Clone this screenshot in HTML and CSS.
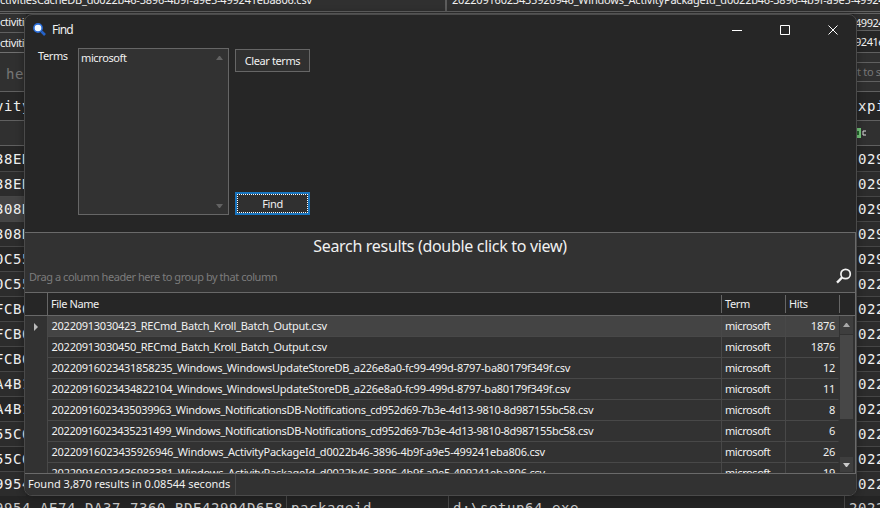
FILE: index.html
```
<!DOCTYPE html>
<html lang="en">
<head>
<meta charset="utf-8">
<title>Find</title>
<link rel="stylesheet" href="styles.css">
</head>
<body>
<main class="desktop">
  <div class="backdrop">
    <div class="band files"><span class="file-a">ctivitiesCacheDB_d0022b46-3896-4b9f-a9e5-499241eba806.csv</span><span class="file-b">20220916023435926946_Windows_ActivityPackageId_d0022b46-3896-4b9f-a9e5-499241eba806.csv</span></div>
    <div class="sides">
      <div class="side left">
        <div class="small r1">ctivities</div><div class="small r2">ctivities</div>
        <div class="group mono">he</div><div class="head mono">vity</div><div class="filter"></div>
        <div class="cell first">38ED</div><div class="cell">38ED</div><div class="cell current">308D</div><div class="cell">308D</div><div class="cell">0C55</div><div class="cell">0C55</div><div class="cell">FCB6</div><div class="cell">FCB6</div><div class="cell">FCB6</div><div class="cell">A4B1</div><div class="cell">A4B1</div><div class="cell">55C6</div><div class="cell">55C6</div><div class="cell">9954</div>
      </div>
      <div class="side right">
        <div class="small q1">49924</div><div class="small q2">9241e</div>
        <div class="search"><span>ct to s</span></div><div class="head mono">xpi</div>
        <div class="filter"><svg width="12" height="12" viewBox="0 0 12 12"><path d="M0 1h5v10H0z" fill="#75c77b"/><path d="M1 4h2v4H1z" fill="#23652b"/><path d="M10 4H7v4h3" fill="none" stroke="#ddd"/></svg></div>
        <div class="cell first">2029</div><div class="cell">2029</div><div class="cell">2029</div><div class="cell">2029</div><div class="cell">2029</div><div class="cell">2022</div><div class="cell">2022</div><div class="cell">2022</div><div class="cell">2022</div><div class="cell">2022</div><div class="cell">2022</div><div class="cell">2022</div><div class="cell">2022</div><div class="cell">2022</div>
      </div>
    </div>
    <div class="last mono"><span class="guid">9954-AE74-DA37-7360-BDE42994D6E8</span><span class="kind">packageid</span><span class="path">d:\setup64.exe</span><span class="date">2022</span></div>
  </div>

  <section class="window">
    <header class="titlebar">
      <svg class="app" width="14" height="14" viewBox="0 0 14 14"><path d="M8.500 8.500 12 12" stroke="#2462c8" stroke-width="2.600"/><circle cx="5" cy="5" r="4.100" fill="#f4faff" stroke="#2c6fda" stroke-width="1.600"/></svg>
      <span class="name">Find</span>
      <svg class="controls" width="106" height="12" viewBox="0 0 106 12" fill="none" stroke="#fff"><path d="M0 6.500h10M48.500 1.500h9v9h-9zM96.500 1.500l9 9m0-9l-9 9"/></svg>
    </header>
    <div class="form">
      <label>Terms</label>
      <div class="memo"><span>microsoft</span><i class="up"></i><i class="down"></i></div>
      <div class="buttons"><button>Clear terms</button><button class="primary"><span>Find</span></button></div>
    </div>
    <div class="results">
      <h1>Search results (double click to view)</h1>
      <div class="drag"><span>Drag a column header here to group by that column</span>
        <svg width="16" height="16" viewBox="0 0 16 16" fill="none" stroke="#f2f2f2"><circle cx="9.600" cy="6" r="4.700" stroke-width="1.700"/><path d="M6.200 9.400 1 14.600" stroke-width="2.300"/></svg></div>
      <div class="thead"><span class="ind"></span><span class="fn">File Name</span><span class="term"><b>Term</b></span><span class="hits"><b>Hits</b></span><span class="end"></span></div>
      <div class="grid">
        <div class="rows">
          <div class="row active"><span class="ind"><i></i></span><span class="fn"><b>20220913030423_RECmd_Batch_Kroll_Batch_Output.csv</b></span><span class="term">microsoft</span><span class="hits">1876</span></div>
          <div class="row"><span class="ind"></span><span class="fn"><b>20220913030450_RECmd_Batch_Kroll_Batch_Output.csv</b></span><span class="term">microsoft</span><span class="hits">1876</span></div>
          <div class="row"><span class="ind"></span><span class="fn"><b>20220916023431858235_Windows_WindowsUpdateStoreDB_a226e8a0-fc99-499d-8797-ba80179f349f.csv</b></span><span class="term">microsoft</span><span class="hits">12</span></div>
          <div class="row"><span class="ind"></span><span class="fn"><b>20220916023434822104_Windows_WindowsUpdateStoreDB_a226e8a0-fc99-499d-8797-ba80179f349f.csv</b></span><span class="term">microsoft</span><span class="hits">11</span></div>
          <div class="row"><span class="ind"></span><span class="fn tight"><b>20220916023435039963_Windows_NotificationsDB-Notifications_cd952d69-7b3e-4d13-9810-8d987155bc58.csv</b></span><span class="term">microsoft</span><span class="hits">8</span></div>
          <div class="row"><span class="ind"></span><span class="fn tight"><b>20220916023435231499_Windows_NotificationsDB-Notifications_cd952d69-7b3e-4d13-9810-8d987155bc58.csv</b></span><span class="term">microsoft</span><span class="hits">6</span></div>
          <div class="row"><span class="ind"></span><span class="fn loose"><b>20220916023435926946_Windows_ActivityPackageId_d0022b46-3896-4b9f-a9e5-499241eba806.csv</b></span><span class="term">microsoft</span><span class="hits">26</span></div>
          <div class="row"><span class="ind"></span><span class="fn loose"><b>20220916023436983381_Windows_ActivityPackageId_d0022b46-3896-4b9f-a9e5-499241eba806.csv</b></span><span class="term">microsoft</span><span class="hits">19</span></div>
        </div>
        <div class="scroll"><div class="arrow"><i class="up"></i></div><div class="thumb"></div><div class="arrow low"><i class="down"></i></div></div>
      </div>
    </div>
    <footer><span>Found 3,870 results in 0.08544 seconds</span></footer>
  </section>
</main>
</body>
</html>
```
FILE: styles.css
```
* { box-sizing: border-box; }
body { margin: 0; background: #262626; color: #f0f0f0; font: 11px/14px "Noto Sans", sans-serif; letter-spacing: -0.26px; }
b { font-weight: 400; }
svg { display: block; flex: none; }
.desktop { position: relative; width: 880px; height: 508px; overflow: hidden; white-space: nowrap; }
.mono, .cell { font-family: "DejaVu Sans Mono", monospace; font-size: 14px; letter-spacing: 0.57px; }
.backdrop { height: 508px; overflow: hidden; }
.files { display: flex; height: 14px; background: #303030; border-bottom: 3px double #626262; }
.files span { display: block; line-height: 14px; margin-top: -7px; height: 18px; overflow: hidden; letter-spacing: -0.21px; }
.file-a { width: 447px; border-right: 2px solid #5c5c5c; }
.file-b { flex: 1; padding-left: 5px; }
.sides { display: flex; justify-content: space-between; height: 482px; }
.side { width: 26px; overflow: hidden; }
.side > div { border-bottom: 1px solid #606060; overflow: hidden; }
.small { background: #303030; display: flex; align-items: center; letter-spacing: -0.45px; }
.side .r1 { height: 19px; padding-bottom: 2px; }
.side .r2 { height: 20px; border-bottom-color: #707070; }
.side .q1 { height: 17px; padding-left: 1px; padding-top: 1px; }
.side .q2 { height: 22px; padding-left: 1px; background: #262626; }
.group { height: 39px; padding-left: 6px; line-height: 42px; color: #777; background: #303030; }
.search { height: 39px; padding: 9px 0 10px; background: #303030; color: #777; letter-spacing: -0.3px; }
.search span { display: block; height: 20px; text-indent: -2px; border: solid #606060; border-width: 1px 0; line-height: 18px; }
.head { height: 29px; line-height: 29px; }
.left .head { text-indent: -4px; }
.right .head { text-indent: 4px; }
.left .head { text-indent: -5px; }
.filter { height: 25px; background: #303030; padding: 6px 0 0 2px; }
.side .cell { height: 25px; line-height: 25px; text-indent: -5px; border-color: #464646; }
.side .cell.first { height: 26px; line-height: 26px; }
.side .cell:nth-child(odd) { background: #2c2c2c; }
.side .current { background: #444 !important; }
.last { display: flex; height: 12px; line-height: 25px; background: #242424; color: #c8c8c8; }
.last span { height: 12px; overflow: hidden; border-right: 1px solid #484848; }
.guid { width: 287px; text-indent: -5px; }
.kind { width: 162px; padding-left: 4px; }
.path { width: 396px; padding-left: 4px; }
.date { flex: 1; padding-left: 4px; border: 0 !important; }

.window { position: absolute; left: 24px; top: 14px; width: 833px; height: 482px; background: #262626; border: 1px solid #4a4a4a; border-radius: 8px; overflow: hidden; display: flex; flex-direction: column; box-shadow: 0 0 8px #0005; }
.titlebar { height: 33px; display: flex; align-items: center; padding: 0 18px 3px 8px; }
.name { margin-left: 5px; font-size: 12px; letter-spacing: -0.8px; }
.controls { margin-left: auto; }
.form { height: 184px; display: flex; align-items: flex-start; padding-left: 13px; }
.form label { width: 40px; padding-top: 1px; }
.form label, .memo, button { letter-spacing: -0.4px; }
.memo { display: grid; grid-template-columns: 1fr 7px; align-content: space-between; width: 151px; height: 167px; border: 1px solid #666; background: #323232; padding: 2px 5px 6px 2px; }
.memo i { align-self: center; }
.memo .down { grid-column: 2; }
i { display: block; }
.up, .down { width: 7px; border: solid transparent; border-width: 0 3.5px 4px; border-bottom-color: #626262; }
.down { border-width: 4px 3.5px 0; border-top-color: #626262; }
.buttons { height: 167px; margin-left: 6px; display: flex; flex-direction: column; justify-content: space-between; }
button { width: 75px; height: 23px; padding: 0; margin-top: 1px; background: #303030; color: #f0f0f0; border: 1px solid #666; font: inherit; }
.primary { border: 2px solid #1874be; }
.primary span { display: block; height: 19px; line-height: 17px; border: 1px dotted #fff; }
.results { height: 242px; border: 1px solid #6a6a6a; background: #323232; margin-left: -1px; display: flex; flex-direction: column; flex: none; }
h1 { margin: 0; height: 30px; line-height: 27px; font-size: 16px; font-weight: 400; text-align: center; letter-spacing: -0.31px; }
.drag { height: 29px; display: flex; justify-content: space-between; align-items: center; padding: 0 3px 1px 4px; color: #7c7c7c; letter-spacing: -0.44px; }
.drag svg { margin-top: -2px; }
.thead { height: 24px; flex: none; display: flex; align-items: center; background: #262626; border: solid #686868; border-width: 1px 0; letter-spacing: -0.4px; }
.ind { width: 23px; height: 100%; border-right: 1px solid #666; display: flex; align-items: center; padding-left: 9px; flex: none; }
.fn { width: 674px; padding-left: 3px; }
.thead .term, .thead .hits { height: 18px; border-left: 1px solid #666; margin-left: -1px; }
.thead .end { height: 18px; border-left: 1px solid #666; }
.thead b { line-height: 18px; }
.term { width: 65px; padding-left: 3px; }
.hits { width: 54px; padding-left: 3px; }
.grid { height: 157px; display: flex; overflow: hidden; }
.rows { width: 814px; }
.row { display: flex; height: 21px; }
.row .ind { border-color: #484848; }
.row > span:not(.ind) { height: 21px; line-height: 20px; border: solid #484848; border-width: 0 1px 1px 0; }
.row .term { width: 64px; letter-spacing: -0.42px; }
.row .hits { width: 53px; padding-right: 3px; text-align: right; border-right-color: transparent !important; }
.row .fn { padding-left: 3.5px; letter-spacing: -0.25px; }
.row .tight { letter-spacing: -0.31px; }
.row .loose { letter-spacing: -0.21px; }
.row.active > span:not(.ind) { background: #444; }
.ind i { border: solid transparent; border-width: 4px 0 4px 4px; border-left-color: #bbb; }
.scroll { width: 13px; margin-left: 1px; display: flex; flex-direction: column; }
.arrow { height: 18px; background: #3e3e3e; display: grid; place-items: center; }
.arrow .up { border-bottom-color: #aaa; }
.arrow .down { border-top-color: #ccc; }
.thumb { height: 84px; background: #474747; margin-top: 1px; }
.low { height: 15px; margin-top: auto; margin-bottom: 1px; }
footer { flex: 1; background: #323232; display: flex; }
footer span { width: 211px; padding: 3px 0 0 3px; border-right: 1px solid #484848; letter-spacing: 0; }
```
